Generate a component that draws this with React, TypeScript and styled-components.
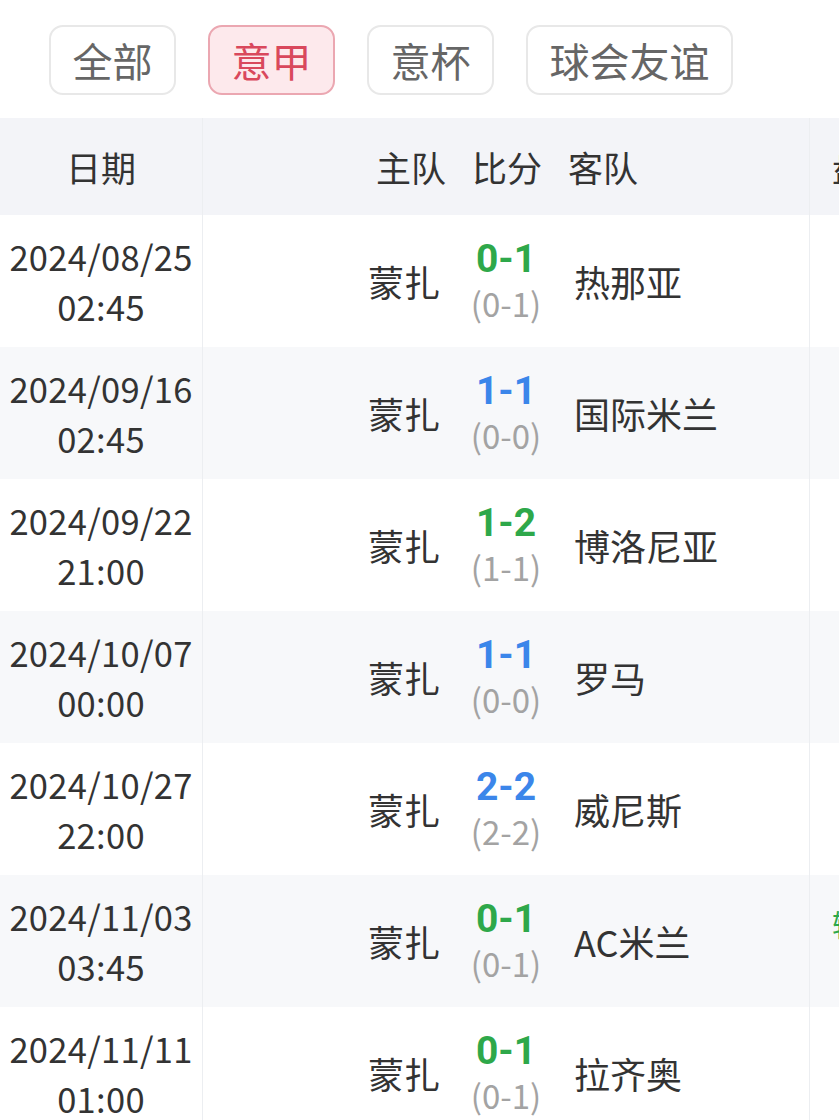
import React from "react";
import styled, { createGlobalStyle } from "styled-components";

const Global = createGlobalStyle`
  html, body { margin: 0; padding: 0; background: #ffffff; overflow: hidden; }
  body { font-family: "Noto Sans CJK SC", "Noto Sans", sans-serif; color: #333333; }
`;

const Page = styled.div`
  width: 839px;
  overflow: hidden;
  background: #ffffff;
`;

const TabBar = styled.div`
  display: flex;
  gap: 32px;
  padding: 25px 0 23px 49px;
`;

const Tab = styled.div<{ $active?: boolean }>`
  height: 70px;
  box-sizing: border-box;
  padding: 0 21.5px;
  display: flex;
  align-items: center;
  justify-content: center;
  border-radius: 14px;
  font-size: 40px;
  line-height: 1;
  border: 2px solid ${(p) => (p.$active ? "#eba7b1" : "#e8e8e8")};
  background: ${(p) => (p.$active ? "#fde9ec" : "#ffffff")};
  color: ${(p) => (p.$active ? "#d9485c" : "#666666")};
`;

const Table = styled.div`
  width: 1000px;
`;

const Row = styled.div<{ $bg: string; $h: number }>`
  display: grid;
  grid-template-columns: 203px 607px 190px;
  height: ${(p) => p.$h}px;
  background: ${(p) => p.$bg};
`;

const Cell = styled.div`
  border-right: 1px solid #eceef1;
  display: flex;
  align-items: center;
  justify-content: center;
  overflow: hidden;
`;

const HeadText = styled.span`
  font-size: 35px;
  color: #333333;
  white-space: nowrap;
`;

const HeadGroup = styled.div`
  display: flex;
  gap: 26px;
  padding-left: 2px;
`;

const ExtraCell = styled.div`
  display: flex;
  align-items: center;
  padding-left: 22px;
  overflow: hidden;
`;

const DateCell = styled(Cell)`
  flex-direction: column;
  font-size: 34.5px;
  line-height: 50px;
  color: #333333;
  letter-spacing: 0.3px;
`;

const Match = styled.div`
  display: grid;
  grid-template-columns: 1fr 132px 1fr;
  align-items: center;
  width: 100%;
`;

const Home = styled.div`
  text-align: right;
  font-size: 36px;
  color: #333333;
`;

const Away = styled.div`
  text-align: left;
  font-size: 36px;
  color: #333333;
  padding-left: 2px;
`;

const ScoreBox = styled.div`
  display: flex;
  flex-direction: column;
  align-items: center;
`;

const Score = styled.div<{ $color: string }>`
  font-size: 39px;
  font-weight: 700;
  line-height: 44px;
  color: ${(p) => p.$color};
  font-family: Roboto, "Noto Sans", sans-serif;
`;

const Half = styled.div`
  font-size: 33px;
  line-height: 44px;
  color: #a3a3a3;
`;

const Mark = styled.span`
  font-size: 30px;
  color: #2ea84a;
  margin-top: -36px;
`;

const GREEN = "#2ea84a";
const BLUE = "#3b86ea";

const matches = [
  { d: "2024/08/25", t: "02:45", away: "热那亚", s: "0-1", h: "(0-1)", c: GREEN },
  { d: "2024/09/16", t: "02:45", away: "国际米兰", s: "1-1", h: "(0-0)", c: BLUE },
  { d: "2024/09/22", t: "21:00", away: "博洛尼亚", s: "1-2", h: "(1-1)", c: GREEN },
  { d: "2024/10/07", t: "00:00", away: "罗马", s: "1-1", h: "(0-0)", c: BLUE },
  { d: "2024/10/27", t: "22:00", away: "威尼斯", s: "2-2", h: "(2-2)", c: BLUE },
  { d: "2024/11/03", t: "03:45", away: "AC米兰", s: "0-1", h: "(0-1)", c: GREEN, mark: "输" },
  { d: "2024/11/11", t: "01:00", away: "拉齐奥", s: "0-1", h: "(0-1)", c: GREEN },
];

export default function App() {
  return (
    <Page>
      <Global />
      <TabBar>
        <Tab>全部</Tab>
        <Tab $active>意甲</Tab>
        <Tab>意杯</Tab>
        <Tab>球会友谊</Tab>
      </TabBar>
      <Table>
        <Row $bg="#f3f4f8" $h={97}>
          <Cell>
            <HeadText>日期</HeadText>
          </Cell>
          <Cell>
            <HeadGroup>
              <HeadText>主队</HeadText>
              <HeadText>比分</HeadText>
              <HeadText>客队</HeadText>
            </HeadGroup>
          </Cell>
          <ExtraCell>
            <HeadText>盘路</HeadText>
          </ExtraCell>
        </Row>
        {matches.map((m, i) => (
          <Row key={m.d} $bg={i % 2 === 1 ? "#f7f8fa" : "#ffffff"} $h={132}>
            <DateCell>
              <div>{m.d}</div>
              <div>{m.t}</div>
            </DateCell>
            <Cell>
              <Match>
                <Home>蒙扎</Home>
                <ScoreBox>
                  <Score $color={m.c}>{m.s}</Score>
                  <Half>{m.h}</Half>
                </ScoreBox>
                <Away>{m.away}</Away>
              </Match>
            </Cell>
            <ExtraCell>{m.mark ? <Mark>{m.mark}</Mark> : null}</ExtraCell>
          </Row>
        ))}
      </Table>
    </Page>
  );
}
